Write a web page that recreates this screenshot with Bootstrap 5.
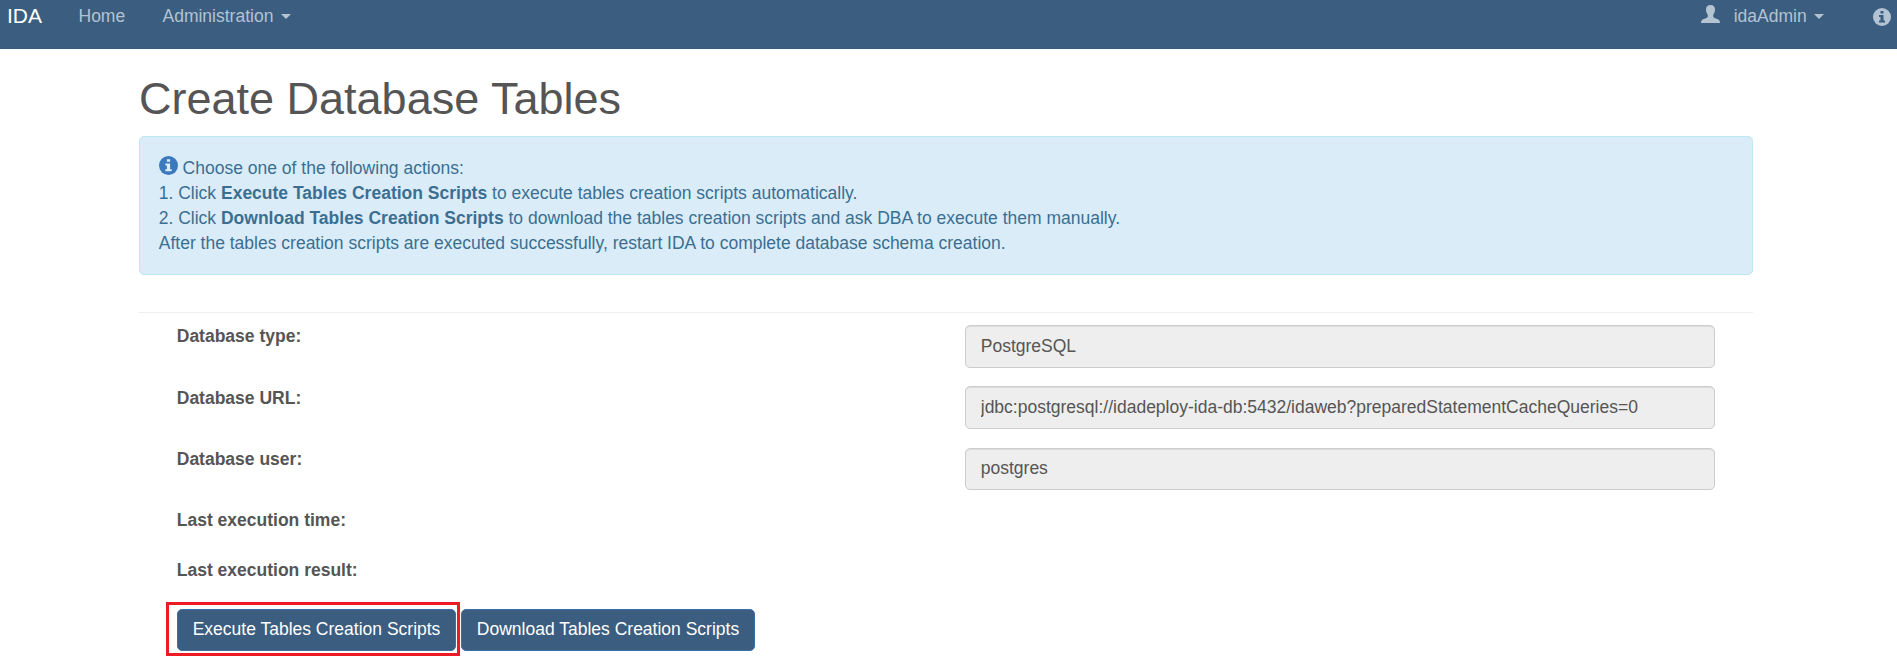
<!DOCTYPE html>
<html lang="en">
<head>
<meta charset="utf-8">
<title>IDA - Create Database Tables</title>
<meta name="viewport" content="width=device-width, initial-scale=1">
<link href="https://cdn.jsdelivr.net/npm/bootstrap@5.3.0/dist/css/bootstrap.min.css" rel="stylesheet">
<style>
  body { font: 17.5px/25px "Liberation Sans", Arial, sans-serif; color: #555; min-height: 100vh; }
  .ida-nav { height: 49px; background: #3a5d80; }
  .ida-nav a { color: #b3c3d2; text-decoration: none; white-space: nowrap; }
  .ida-nav .brand-link { color: #fff; font-size: 21px; margin: 3px 0 0 7px; width: 71.5px; }
  .nav-home { margin-top: 3.5px; width: 84px; }
  .nav-admin { margin-top: 3.5px; }
  .user-icon { margin: 5px 14px 0 0; }
  .nav-user > span { margin-top: 3.5px; }
  .nav-info { margin: 8px 6px 0 49px; }
  .caret { display: inline-block; margin-left: 2.5px; vertical-align: middle; border: 5px solid transparent; border-top-color: currentColor; border-bottom: 0; }
  .ida-page { margin-left: 139px; width: 1614px; }
  .ida-title { font-size: 45px; line-height: 50px; margin: 25px 0 12px; font-weight: 400; }
  .ida-alert { background: #daecf8; border: 1px solid #bce8f1; border-radius: 5px; color: #3a6f92; padding: 18.75px; height: 139px; margin-bottom: 37px; }
  .alert-icon { vertical-align: -1px; }
  .ida-line { height: 1px; background: #eee; }
  .ida-form { padding: 12px 19px 0; }
  .ida-form .row { --bs-gutter-x: 37.5px; margin: 0; }
  .field-row { height: 61.25px; }
  .text-row { height: 50px; }
  .ida-form label { display: block; font-weight: 700; margin-top: -.6px; }
  .ida-form .form-control { height: 42.5px; padding: 7.5px 15px; font-size: 17.5px; line-height: 25px; color: #555; background: #eee; border-color: #ccc; border-radius: 5px; box-shadow: inset 0 1px 1px rgba(0,0,0,.075); }
  .ida-actions { padding-left: 19px; }
  .ida-btn { height: 42px; padding: 0 14.5px 1px; font-size: 17.5px; line-height: 39px; color: #fff; background: #3a5d80; border: 1px solid #3d6ea5; border-radius: 5px; }
  .ida-execute { width: 279px; }
  .ida-download { width: 294px; }
  .execute-wrap { margin-right: 5px; }
  .red-frame { inset: -7px -4px -5px -11px; border: 3px solid #ed1c24; pointer-events: none; }
</style>
</head>
<body>
<nav class="ida-nav d-flex align-items-start">
  <a class="brand-link" href="#">IDA</a>
  <a class="nav-home" href="#">Home</a>
  <a class="nav-admin" href="#">Administration <span class="caret"></span></a>
  <a class="nav-user ms-auto d-flex" href="#">
    <svg class="user-icon" width="19" height="18" viewBox="0 0 19 18" fill="currentColor"><path d="M9.500 0C6.500 0 4.900 1.800 5 4.500c0 1.900.6 3.700 1.700 5v2.200c-.3.9-2 1.600-3.900 2.300C.9 14.700 0 15.700 0 18h19c0-2.300-.9-3.300-2.800-4-1.900-.7-3.600-1.400-3.900-2.300V9.500c1.100-1.300 1.700-3.100 1.700-5C14.100 1.800 12.500 0 9.500 0z"/></svg>
    <span>idaAdmin <span class="caret"></span></span>
  </a>
  <a class="nav-info" href="#" aria-label="Information"><svg class="d-block" width="18" height="18" viewBox="0 0 18 18"><circle cx="9" cy="9" r="9" fill="currentColor"/><path fill="#3a5d80" d="M7.500 3h3v2.500h-3zM6 7h4.500v5.500H12v2H6v-2h1.500V9H6z"/></svg></a>
</nav>
<main class="ida-page">
  <h1 class="ida-title">Create Database Tables</h1>
  <div class="ida-alert">
    <svg class="alert-icon" width="19" height="19" viewBox="0 0 18 18"><circle cx="9" cy="9" r="9" fill="#3b79bd"/><path fill="#daecf8" d="M7.500 3h3v2.500h-3zM6 7h4.500v5.500H12v2H6v-2h1.500V9H6z"/></svg>
    Choose one of the following actions:<br>
    1. Click <b>Execute Tables Creation Scripts</b> to execute tables creation scripts automatically.<br>
    2. Click <b>Download Tables Creation Scripts</b> to download the tables creation scripts and ask DBA to execute them manually.<br>
    After the tables creation scripts are executed successfully, restart IDA to complete database schema creation.
  </div>
  <div class="ida-line"></div>
  <form class="ida-form">
    <div class="row field-row"><div class="col-6"><label for="dbType">Database type:</label></div><div class="col-6"><input class="form-control" id="dbType" value="PostgreSQL" readonly></div></div>
    <div class="row field-row"><div class="col-6"><label for="dbUrl">Database URL:</label></div><div class="col-6"><input class="form-control" id="dbUrl" value="jdbc:postgresql://idadeploy-ida-db:5432/idaweb?preparedStatementCacheQueries=0" readonly></div></div>
    <div class="row field-row"><div class="col-6"><label for="dbUser">Database user:</label></div><div class="col-6"><input class="form-control" id="dbUser" value="postgres" readonly></div></div>
    <div class="row text-row"><div class="col-6"><label>Last execution time:</label></div></div>
    <div class="row text-row"><div class="col-6"><label>Last execution result:</label></div></div>
    <div class="ida-actions d-flex">
      <div class="execute-wrap position-relative"><button type="button" class="btn ida-btn ida-execute text-nowrap">Execute Tables Creation Scripts</button><div class="red-frame position-absolute"></div></div>
      <button type="button" class="btn ida-btn ida-download text-nowrap">Download Tables Creation Scripts</button>
    </div>
  </form>
</main>
<script src="https://cdn.jsdelivr.net/npm/bootstrap@5.3.0/dist/js/bootstrap.bundle.min.js"></script>
</body>
</html>
